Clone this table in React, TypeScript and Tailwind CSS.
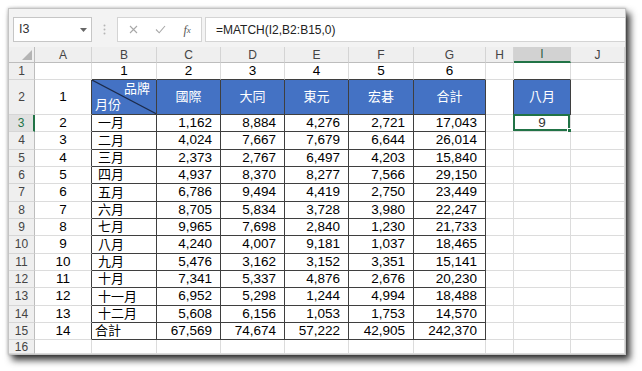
import React from "react";

const cols = ["A", "B", "C", "D", "E", "F", "G", "H", "I", "J"];

const body: string[][] = [
  ["一月", "1,162", "8,884", "4,276", "2,721", "17,043"],
  ["二月", "4,024", "7,667", "7,679", "6,644", "26,014"],
  ["三月", "2,373", "2,767", "6,497", "4,203", "15,840"],
  ["四月", "4,937", "8,370", "8,277", "7,566", "29,150"],
  ["五月", "6,786", "9,494", "4,419", "2,750", "23,449"],
  ["六月", "8,705", "5,834", "3,728", "3,980", "22,247"],
  ["七月", "9,965", "7,698", "2,840", "1,230", "21,733"],
  ["八月", "4,240", "4,007", "9,181", "1,037", "18,465"],
  ["九月", "5,476", "3,162", "3,152", "3,351", "15,141"],
  ["十月", "7,341", "5,337", "4,876", "2,676", "20,230"],
  ["十一月", "6,952", "5,298", "1,244", "4,994", "18,488"],
  ["十二月", "5,608", "6,156", "1,053", "1,753", "14,570"],
  ["合計", "67,569", "74,674", "57,222", "42,905", "242,370"],
];

const brands = ["國際", "大同", "東元", "宏碁", "合計"];

// which cell edges belong to the dark table border
function edges(r: number, c: number) {
  const inTable = r >= 2 && r <= 15 && c >= 1 && c <= 6;
  const rightDark = inTable || (r >= 2 && r <= 15 && c === 0) || (r === 2 && (c === 7 || c === 8));
  const bottomDark = inTable || (r === 1 && ((c >= 1 && c <= 6) || c === 8)) || (r === 2 && c === 8);
  return `border-r border-b ${rightDark ? "border-r-[#3f3f3f]" : "border-r-[#dcdcdc]"} ${
    bottomDark ? "border-b-[#3f3f3f]" : "border-b-[#dcdcdc]"
  }`;
}

function RowHead({ n }: { n: number }) {
  const selected = n === 3;
  return (
    <div
      className={`flex justify-center border-b border-b-[#d6d6d6] text-[12px] leading-[12px] ${
        n === 16 ? "items-start pt-[1px]" : "items-center"
      } ${
        selected
          ? "bg-[#e1e1e1] border-r-2 border-r-[#217346] text-[#217346]"
          : "bg-[#efefef] border-r border-r-[#bdbdbd] text-[#444]"
      }`}
    >
      {n}
    </div>
  );
}

function cellContent(r: number, c: number) {
  if (r === 1) {
    if (c >= 1 && c <= 6) return <span className="text-[13.5px]">{c}</span>;
    return null;
  }
  if (r === 2) {
    if (c === 0) return <span className="text-[13.5px]">1</span>;
    if (c === 1)
      return (
        <div className="relative flex h-full w-full flex-col justify-between px-[3px] pt-[1px] pb-[1px] text-white text-[13px]">
          <svg className="absolute inset-0 h-full w-full" viewBox="0 0 100 100" preserveAspectRatio="none">
            <line x1="0" y1="0" x2="100" y2="100" stroke="#1c2b4a" strokeWidth="1.2" vectorEffect="non-scaling-stroke" />
          </svg>
          <span className="self-end pr-[3px] leading-[16px]">品牌</span>
          <span className="self-start leading-[16px]">月份</span>
        </div>
      );
    if (c >= 2 && c <= 6) return <span className="text-[13px] text-white">{brands[c - 2]}</span>;
    if (c === 8) return <span className="text-[13px] text-white">八月</span>;
    return null;
  }
  if (r >= 3 && r <= 15) {
    const d = body[r - 3];
    if (c === 0) return <span className="text-[13.5px]">{r - 1}</span>;
    if (c === 1) return <span className={`text-[13px] ${r === 15 ? "pl-[3px]" : "pl-[6px]"}`}>{d[0]}</span>;
    if (c >= 2 && c <= 6) return <span className="pr-[8px] text-[13.5px]">{d[c - 1]}</span>;
    if (c === 8 && r === 3)
      return (
        <>
          <span className="text-[13.5px] text-[#333]">9</span>
          <div className="absolute -left-[1px] -top-[1px] right-0 bottom-0 border-2 border-[#217346]" />
          <div className="absolute -right-[3px] -bottom-[3px] h-[6px] w-[6px] border border-white bg-[#217346]" />
        </>
      );
  }
  return null;
}

function align(r: number, c: number) {
  if (r >= 3 && r <= 15 && c >= 2 && c <= 6) return "justify-end";
  if (r >= 3 && r <= 15 && c === 1) return "justify-start";
  return "justify-center";
}

export default function App() {
  const sheetRows = Array.from({ length: 16 }, (_, i) => i + 1);
  return (
    <div className="h-[371px] w-[642px] overflow-hidden bg-white pl-[8px] pt-[8px] font-['Liberation_Sans','Noto_Sans_CJK_TC',sans-serif] text-black">
      <div className="flex h-[347px] w-[618px] flex-col border border-[#c4c4c4] bg-white shadow-[4px_5px_7px_rgba(0,0,0,0.8),0_0_3px_rgba(0,0,0,0.25)]">
        {/* formula bar */}
        <div className="flex h-[38px] shrink-0 items-start bg-[#f3f3f3] pl-[4px] pt-[8px]">
          <div className="flex h-[25px] w-[79px] items-center justify-between border border-[#c6c6c6] bg-white pl-[5px] pr-[4px] text-[12.5px] text-[#333]">
            <span>I3</span>
            <svg width="7" height="4" viewBox="0 0 7 4">
              <path d="M0 0h7L3.5 4z" fill="#666" />
            </svg>
          </div>
          <div className="flex h-[25px] w-[25px] items-center justify-center">
            <svg width="3" height="11" viewBox="0 0 3 11">
              <circle cx="1.5" cy="1.5" r="1" fill="#b5b5b5" />
              <circle cx="1.5" cy="5.5" r="1" fill="#b5b5b5" />
              <circle cx="1.5" cy="9.5" r="1" fill="#b5b5b5" />
            </svg>
          </div>
          <div className="flex h-[25px] w-[85px] items-center border border-[#d4d4d4] bg-white">
            <div className="flex w-[30px] justify-center pl-[2px]">
              <svg width="9" height="9" viewBox="0 0 9 9">
                <path d="M1 1l7 7M8 1L1 8" stroke="#a8a8a8" strokeWidth="1.1" />
              </svg>
            </div>
            <div className="flex w-[26px] justify-center">
              <svg width="11" height="9" viewBox="0 0 11 9">
                <path d="M1 4.5l3.2 3.3L10 1" stroke="#a8a8a8" strokeWidth="1.1" fill="none" />
              </svg>
            </div>
            <div className="flex w-[28px] justify-center font-['Liberation_Serif',serif] text-[12px] italic text-[#555]">
              f<span className="text-[9px] leading-[18px]">x</span>
            </div>
          </div>
          <div className="ml-[3px] flex h-[25px] flex-1 items-center border border-r-0 border-[#d4d4d4] bg-white pl-[10px] text-[12px] text-[#222]">
            =MATCH(I2,B2:B15,0)
          </div>
        </div>

        {/* sheet grid */}
        <div className="grid flex-1 grid-cols-[26px_57px_65px_64px_64px_64px_65px_72px_28px_57px_1fr] grid-rows-[16px_17.33px_34.67px_repeat(13,17.33px)_1fr] overflow-hidden">
          <div className="flex items-end justify-end border-r border-b border-r-[#bdbdbd] border-b-[#bdbdbd] bg-[#efefef] p-[2px]">
            <svg width="10" height="10" viewBox="0 0 10 10">
              <path d="M10 0v10H0z" fill="#b4b4b4" />
            </svg>
          </div>
          {cols.map((c) =>
            c === "I" ? (
              <div
                key={c}
                className="flex items-center justify-center border-r border-b-2 border-r-[#cfcfcf] border-b-[#217346] bg-[#d2d2d2] text-[12px] text-[#2f5f45]"
              >
                {c}
              </div>
            ) : (
              <div
                key={c}
                className="flex items-center justify-center border-r border-b border-r-[#d4d4d4] border-b-[#bdbdbd] bg-[#efefef] text-[12px] text-[#444]"
              >
                {c}
              </div>
            )
          )}
          {sheetRows.map((r) => (
            <React.Fragment key={r}>
              <RowHead n={r} />
              {cols.map((_, c) => {
                const blue = r === 2 && ((c >= 1 && c <= 6) || c === 8);
                return (
                  <div
                    key={c}
                    className={`relative flex items-center ${align(r, c)} ${edges(r, c)} ${
                      blue ? "bg-[#4472c4]" : "bg-white"
                    }`}
                  >
                    {cellContent(r, c)}
                  </div>
                );
              })}
            </React.Fragment>
          ))}
        </div>
      </div>
    </div>
  );
}
